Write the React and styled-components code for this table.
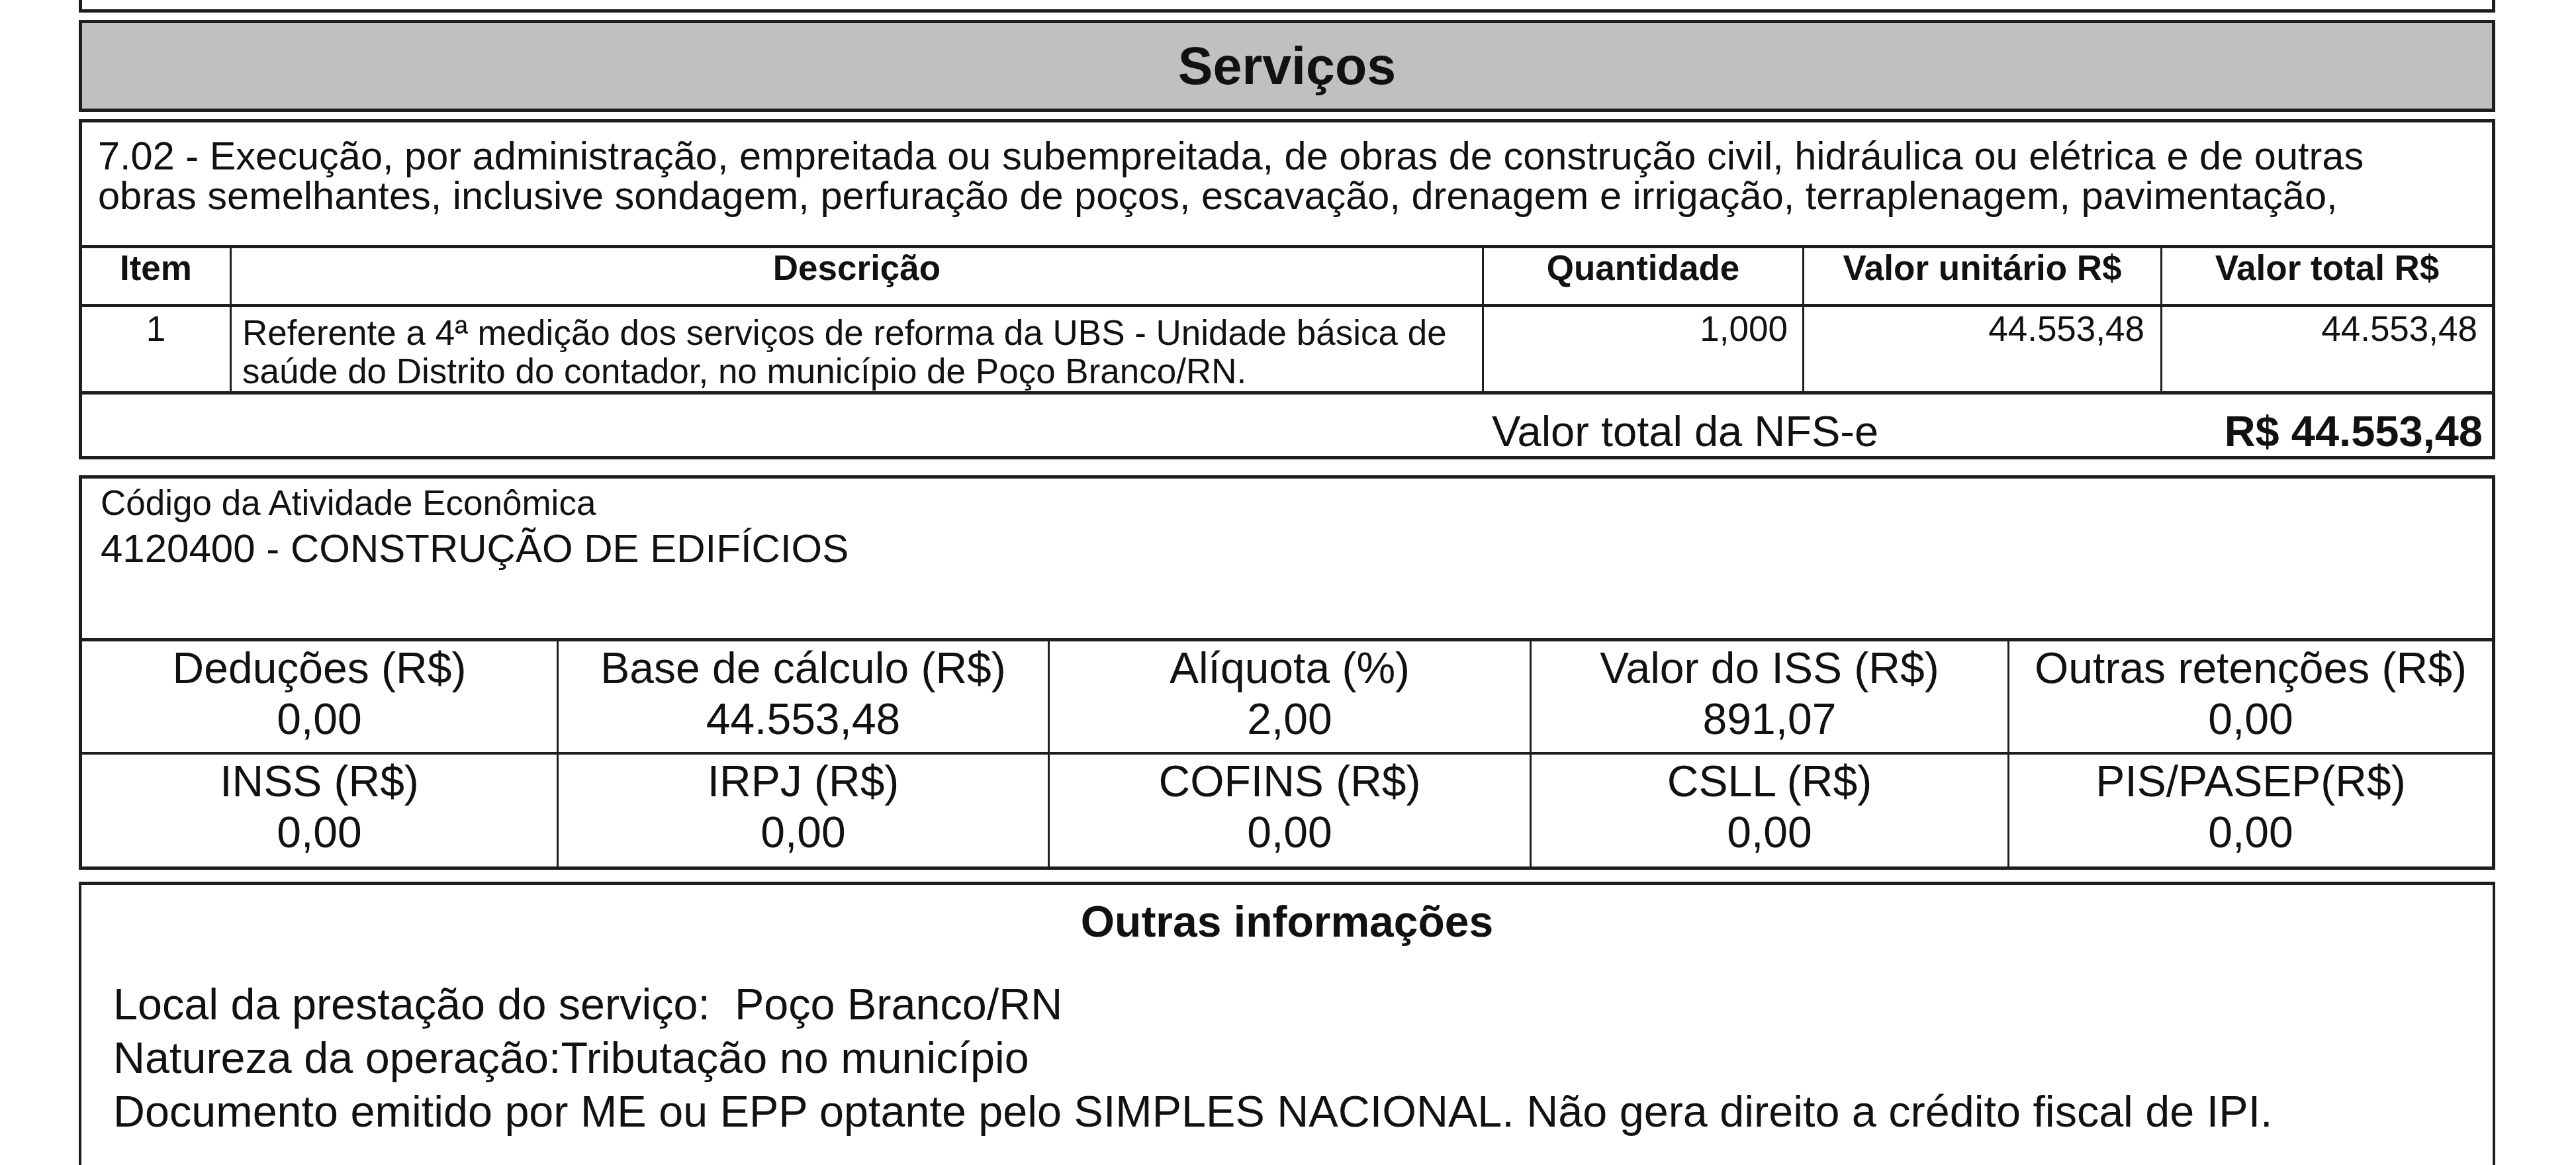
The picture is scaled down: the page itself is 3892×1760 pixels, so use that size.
import styled, { createGlobalStyle } from "styled-components";

const GlobalStyle = createGlobalStyle`
  html, body {
    margin: 0;
    padding: 0;
    background: #fff;
    overflow: hidden;
  }
  body {
    font-family: "Liberation Sans", Arial, Helvetica, sans-serif;
    color: #111;
  }
`;

const LINE = "#1e1e1e";
const TABLE_COLS = "228px 1892px 484px 541px 506px";
const TAX_COLS = "722px 742px 728px 722px 737px";

const Page = styled.div`
  width: 3651px;
  margin-left: 119px;
  display: flex;
  flex-direction: column;
`;

const TopStub = styled.div`
  height: 19px;
  box-sizing: border-box;
  border: 5px solid ${LINE};
  border-top: none;
`;

const Box = styled.div`
  margin-top: ${(p) => p.gap || 11}px;
  border: 5px solid ${LINE};
  border-left-width: ${(p) => p.side || 5}px;
  border-right-width: ${(p) => p.side || 5}px;
  box-sizing: border-box;
`;

const Banner = styled(Box)`
  height: 139px;
  background: #c0c0c0;
  display: flex;
  align-items: center;
  justify-content: center;
  font-weight: 700;
  font-size: 79px;
`;

const ServiceText = styled.div`
  padding: 21px 24px 44px 24px;
  font-size: 59.5px;
  line-height: 60px;
  white-space: nowrap;
`;

const Row = styled.div`
  display: grid;
  grid-template-columns: ${TABLE_COLS};
  margin-left: -5px;
  margin-right: -5px;
  border-top: ${(p) => p.top || 0}px solid ${LINE};
  border-bottom: ${(p) => p.bottom || 0}px solid ${LINE};
  height: ${(p) => p.h}px;
  box-sizing: content-box;
`;

const Cell = styled.div`
  border-left: ${(p) => (p.first ? 5 : 3)}px solid ${LINE};
  ${(p) => p.last && `border-right: 5px solid ${LINE};`}
  text-align: ${(p) => p.align || "left"};
  padding: ${(p) => p.pad || "0 20px"};
  font-size: ${(p) => p.size || 53}px;
  font-weight: ${(p) => (p.bold ? 700 : 400)};
  line-height: ${(p) => p.lh || 60}px;
  white-space: nowrap;
  overflow: hidden;
`;

const TotalRow = styled.div`
  display: grid;
  grid-template-columns: 2120px 1025px 506px;
  height: 93px;
  padding-top: 17px;
  box-sizing: border-box;
`;

const TotalLabel = styled.div`
  grid-column: 2;
  padding-left: 10px;
  font-size: 65px;
  line-height: 77px;
`;

const TotalValue = styled.div`
  text-align: right;
  padding-right: 24px;
  font-size: 65px;
  font-weight: 700;
  line-height: 77px;
`;

const ActivityInfo = styled.div`
  height: 241px;
  padding: 6px 0 0 28px;
  box-sizing: border-box;
`;

const ActivityLabel = styled.div`
  font-size: 53px;
  line-height: 61px;
`;

const ActivityCode = styled.div`
  margin-top: 4px;
  font-size: 60px;
  line-height: 69px;
`;

const TaxGrid = styled.div`
  display: grid;
  grid-template-columns: ${TAX_COLS};
  margin: 0 -5px -5px -5px;
  border-top: 5px solid ${LINE};
`;

const TaxCell = styled.div`
  height: ${(p) => p.h}px;
  padding-top: 2px;
  box-sizing: border-box;
  border-left: ${(p) => (p.first ? 5 : 3)}px solid ${LINE};
  ${(p) => p.last && `border-right: 5px solid ${LINE};`}
  border-bottom: ${(p) => (p.bottomRow ? 5 : 4)}px solid ${LINE};
  text-align: center;
  font-size: 66px;
  line-height: 77px;
  white-space: nowrap;
`;

const OtherBox = styled(Box)`
  height: 520px;
  border-bottom: none;
  padding: 17px 0 0 48px;
`;

const OtherTitle = styled.div`
  margin-left: -48px;
  text-align: center;
  font-weight: 700;
  font-size: 66px;
  line-height: 76px;
`;

const OtherLines = styled.div`
  margin-top: 47px;
  font-size: 66.5px;
  line-height: 81px;
  white-space: pre;
`;

const taxes = [
  [
    ["Deduções (R$)", "0,00"],
    ["Base de cálculo (R$)", "44.553,48"],
    ["Alíquota (%)", "2,00"],
    ["Valor do ISS (R$)", "891,07"],
    ["Outras retenções (R$)", "0,00"],
  ],
  [
    ["INSS (R$)", "0,00"],
    ["IRPJ (R$)", "0,00"],
    ["COFINS (R$)", "0,00"],
    ["CSLL (R$)", "0,00"],
    ["PIS/PASEP(R$)", "0,00"],
  ],
];

const heads = ["Item", "Descrição", "Quantidade", "Valor unitário R$", "Valor total R$"];

export default function App() {
  return (
    <>
      <GlobalStyle />
      <Page>
        <TopStub />
        <Banner>Serviços</Banner>

        <Box>
          <ServiceText>
            7.02 - Execução, por administração, empreitada ou subempreitada, de obras de construção civil, hidráulica ou elétrica e de outras
            <br />
            obras semelhantes, inclusive sondagem, perfuração de poços, escavação, drenagem e irrigação, terraplenagem, pavimentação,
          </ServiceText>

          <Row top={5} bottom={5} h={84}>
            {heads.map((h, i) => (
              <Cell key={h} first={i === 0} last={i === heads.length - 1} bold align="center" size={53}>
                {h}
              </Cell>
            ))}
          </Row>

          <Row bottom={5} h={127}>
            <Cell first align="center" pad="3px 0 0 0">1</Cell>
            <Cell pad="10px 10px 0 16px" lh={58}>
              Referente a 4ª medição dos serviços de reforma da UBS - Unidade básica de
              <br />
              saúde do Distrito do contador, no município de Poço Branco/RN.
            </Cell>
            <Cell align="right" pad="3px 22px 0 0">1,000</Cell>
            <Cell align="right" pad="3px 24px 0 0">44.553,48</Cell>
            <Cell last align="right" pad="3px 22px 0 0">44.553,48</Cell>
          </Row>

          <TotalRow>
            <TotalLabel>Valor total da NFS-e</TotalLabel>
            <TotalValue>R$ 44.553,48</TotalValue>
          </TotalRow>
        </Box>

        <Box gap={24}>
          <ActivityInfo>
            <ActivityLabel>Código da Atividade Econômica</ActivityLabel>
            <ActivityCode>4120400 - CONSTRUÇÃO DE EDIFÍCIOS</ActivityCode>
          </ActivityInfo>
          <TaxGrid>
            {taxes.map((row, r) =>
              row.map(([label, value], i) => (
                <TaxCell
                  key={label}
                  h={r === 0 ? 171 : 174}
                  first={i === 0}
                  last={i === row.length - 1}
                  bottomRow={r === 1}
                >
                  {label}
                  <br />
                  {value}
                </TaxCell>
              ))
            )}
          </TaxGrid>
        </Box>

        <OtherBox gap={18} side={4}>
          <OtherTitle>Outras informações</OtherTitle>
          <OtherLines>
            {"Local da prestação do serviço:  Poço Branco/RN\nNatureza da operação:Tributação no município\nDocumento emitido por ME ou EPP optante pelo SIMPLES NACIONAL. Não gera direito a crédito fiscal de IPI."}
          </OtherLines>
        </OtherBox>
      </Page>
    </>
  );
}
